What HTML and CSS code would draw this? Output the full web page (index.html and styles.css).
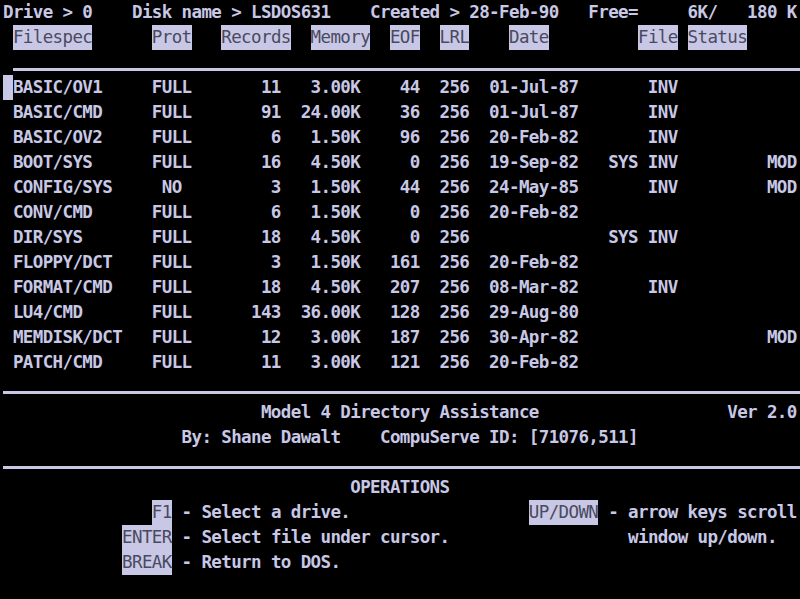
FILE: index.html
```html
<!DOCTYPE html>
<html>
<head>
<meta charset="utf-8">
<title>Model 4 Directory Assistance</title>
<link rel="stylesheet" href="styles.css">
</head>
<body>
<div class="screen">
<div class="row">Drive &gt; 0    Disk name &gt; LSDOS631    Created &gt; 28-Feb-90   Free=     6K/   180 K</div>
<div class="row"> <span class="inv">Filespec</span>      <span class="inv">Prot</span>   <span class="inv">Records</span>  <span class="inv">Memory</span>  <span class="inv">EOF</span>  <span class="inv">LRL</span>    <span class="inv">Date</span>         <span class="inv">File</span> <span class="inv">Status</span></div>
<div class="row rule-row rule-row-top"><div class="rule rule-indent"></div></div>
<div class="row"><span class="inv cursor"> </span>BASIC/OV1     FULL       11   3.00K    44  256  01-Jul-87       INV</div>
<div class="row"> BASIC/CMD     FULL       91  24.00K    36  256  01-Jul-87       INV</div>
<div class="row"> BASIC/OV2     FULL        6   1.50K    96  256  20-Feb-82       INV</div>
<div class="row"> BOOT/SYS      FULL       16   4.50K     0  256  19-Sep-82   SYS INV         MOD</div>
<div class="row"> CONFIG/SYS     NO         3   1.50K    44  256  24-May-85       INV         MOD</div>
<div class="row"> CONV/CMD      FULL        6   1.50K     0  256  20-Feb-82</div>
<div class="row"> DIR/SYS       FULL       18   4.50K     0  256              SYS INV</div>
<div class="row"> FLOPPY/DCT    FULL        3   1.50K   161  256  20-Feb-82</div>
<div class="row"> FORMAT/CMD    FULL       18   4.50K   207  256  08-Mar-82       INV</div>
<div class="row"> LU4/CMD       FULL      143  36.00K   128  256  29-Aug-80</div>
<div class="row"> MEMDISK/DCT   FULL       12   3.00K   187  256  30-Apr-82                   MOD</div>
<div class="row"> PATCH/CMD     FULL       11   3.00K   121  256  20-Feb-82</div>
<div class="row rule-row"><div class="rule"></div></div>
<div class="row">                          Model 4 Directory Assistance                   Ver 2.0</div>
<div class="row">                  By: Shane Dawalt    CompuServe ID: [71076,511]</div>
<div class="row rule-row"><div class="rule"></div></div>
<div class="row">                                   OPERATIONS</div>
<div class="row">               <span class="inv">F1</span> - Select a drive.                  <span class="inv">UP/DOWN</span> - arrow keys scroll</div>
<div class="row">            <span class="inv">ENTER</span> - Select file under cursor.                  window up/down.</div>
<div class="row">            <span class="inv">BREAK</span> - Return to DOS.</div>
<div class="row"></div>
</div>
</body>
</html>
```

FILE: styles.css
```css
html, body {
  margin: 0;
  padding: 0;
  background: #000;
}

.screen {
  width: 800px;
  height: 599px;
  overflow: hidden;
  padding-left: 3px;
  box-sizing: border-box;
  font-family: "DejaVu Sans Mono", "Liberation Mono", monospace;
  font-size: 17.5px;
  letter-spacing: -0.615px;
  font-weight: bold;
  color: #c8c8e6;
}

.row {
  height: 25px;
  line-height: 25px;
  white-space: pre;
  box-sizing: border-box;
}

.inv {
  display: inline-block;
  height: 25px;
  line-height: 25px;
  vertical-align: top;
  background: #c8c8e6;
  color: #4a4a5e;
  font-weight: normal;
}

.rule-row {
  padding-top: 16px;
}

.rule-row-top {
  padding-top: 18px;
}

.rule {
  height: 3px;
  background: #c8c8e6;
}

.rule-indent {
  margin-left: 9.92px;
}
```
